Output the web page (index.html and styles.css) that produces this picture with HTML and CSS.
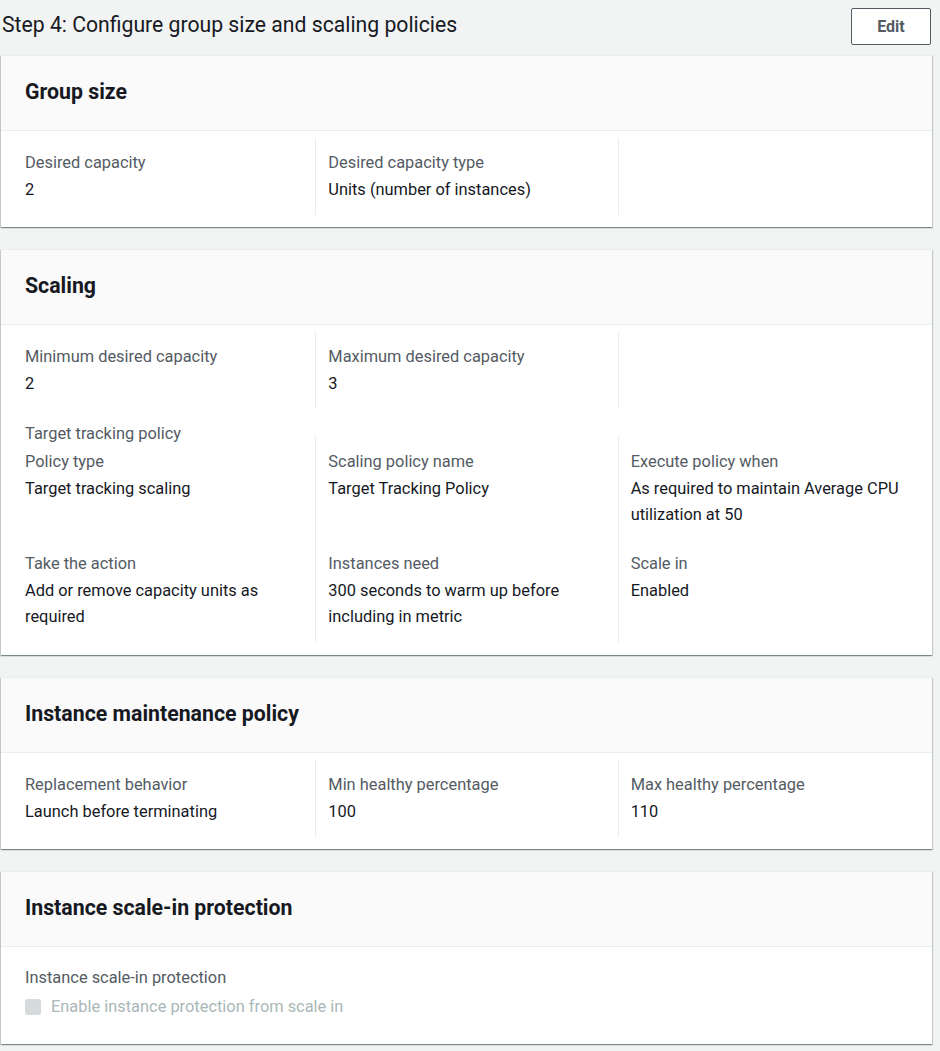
FILE: index.html
```html
<!DOCTYPE html>
<html lang="en">
<head>
<meta charset="utf-8">
<title>Step 4: Configure group size and scaling policies</title>
<link rel="stylesheet" href="styles.css">
</head>
<body>
<div class="page">
  <div class="step-header">
    <h2 class="step-title">Step 4: Configure group size and scaling policies</h2>
    <button class="btn-edit" type="button">Edit</button>
  </div>

  <section class="card">
    <div class="card-header"><h3>Group size</h3></div>
    <div class="card-body">
      <div class="grid">
        <div class="cell">
          <div class="label">Desired capacity</div>
          <div class="value">2</div>
        </div>
        <div class="cell">
          <div class="label">Desired capacity type</div>
          <div class="value">Units (number of instances)</div>
        </div>
        <div class="cell"></div>
      </div>
    </div>
  </section>

  <section class="card">
    <div class="card-header"><h3>Scaling</h3></div>
    <div class="card-body">
      <div class="grid">
        <div class="cell">
          <div class="label">Minimum desired capacity</div>
          <div class="value">2</div>
        </div>
        <div class="cell">
          <div class="label">Maximum desired capacity</div>
          <div class="value">3</div>
        </div>
        <div class="cell"></div>
      </div>
      <div class="sub-heading">Target tracking policy</div>
      <div class="grid grid-policy">
        <div class="cell row-first">
          <div class="label">Policy type</div>
          <div class="value">Target tracking scaling</div>
        </div>
        <div class="cell row-first">
          <div class="label">Scaling policy name</div>
          <div class="value">Target Tracking Policy</div>
        </div>
        <div class="cell row-first">
          <div class="label">Execute policy when</div>
          <div class="value">As required to maintain Average CPU utilization at 50</div>
        </div>
        <div class="cell row-last">
          <div class="label">Take the action</div>
          <div class="value">Add or remove capacity units as required</div>
        </div>
        <div class="cell row-last">
          <div class="label">Instances need</div>
          <div class="value">300 seconds to warm up before including in metric</div>
        </div>
        <div class="cell row-last">
          <div class="label">Scale in</div>
          <div class="value">Enabled</div>
        </div>
      </div>
    </div>
  </section>

  <section class="card">
    <div class="card-header"><h3>Instance maintenance policy</h3></div>
    <div class="card-body">
      <div class="grid">
        <div class="cell">
          <div class="label">Replacement behavior</div>
          <div class="value">Launch before terminating</div>
        </div>
        <div class="cell">
          <div class="label">Min healthy percentage</div>
          <div class="value">100</div>
        </div>
        <div class="cell">
          <div class="label">Max healthy percentage</div>
          <div class="value">110</div>
        </div>
      </div>
    </div>
  </section>

  <section class="card">
    <div class="card-header"><h3>Instance scale-in protection</h3></div>
    <div class="card-body card-body-plain">
      <div class="label">Instance scale-in protection</div>
      <label class="checkbox">
        <span class="checkbox-box"></span>
        <span class="checkbox-text">Enable instance protection from scale in</span>
      </label>
    </div>
  </section>
</div>
</body>
</html>
```

FILE: styles.css
```css
* { box-sizing: border-box; }

html, body {
  margin: 0;
  padding: 0;
  background: #f2f3f3;
}

body {
  font-family: Roboto, "Liberation Sans", sans-serif;
  color: #16191f;
  font-size: 16.4px;
  line-height: 26px;
}

.page {
  width: 932px;
  padding: 0 0 0 1px;
}

.step-header {
  display: flex;
  align-items: center;
  justify-content: space-between;
  height: 55px;
  padding-bottom: 1px;
}

.step-title {
  margin: 0 0 0 1px;
  font-size: 21.2px;
  font-weight: 400;
  line-height: 28px;
  color: #16191f;
  position: relative;
  top: -2px;
}

.btn-edit {
  width: 80px;
  height: 37px;
  margin-right: 1px;
  margin-top: -1px;
  background: #fff;
  border: 1px solid #545b64;
  border-radius: 2px;
  font-family: inherit;
  font-size: 16px;
  font-weight: 700;
  color: #545b64;
  padding: 0;
}

.card {
  background: #fff;
  box-shadow: 0 1px 1px 0 rgba(0, 28, 36, 0.3), 1px 1px 1px 0 rgba(0, 28, 36, 0.15), -1px 1px 1px 0 rgba(0, 28, 36, 0.15);
  border-top: 1px solid #eaeded;
  margin-bottom: 22px;
  width: 931px;
}

.card-header {
  background: #fafafa;
  border-bottom: 1px solid #eaeded;
  height: 75px;
  padding: 0 24px;
  display: flex;
  align-items: center;
}

.card-header h3 {
  margin: 0;
  font-size: 21.3px;
  font-weight: 700;
  line-height: 26px;
  color: #16191f;
  position: relative;
  top: -1px;
}

.card-body {
  padding: 7px 12px 12px;
}

.grid {
  display: grid;
  grid-template-columns: 1fr 1fr 1fr;
}

.cell {
  padding: 12px 12px 12px;
}

.cell:nth-child(3n+2),
.cell:nth-child(3n) {
  border-left: 1px solid #eaeded;
}

.grid-policy {
  margin-top: -11px;
}

.grid-policy .row-first {
  padding-top: 13px;
  padding-bottom: 11px;
}

.grid-policy .row-last {
  padding-top: 12px;
  padding-bottom: 13px;
}

.label {
  color: #545b64;
  margin-bottom: 1px;
}

.value {
  color: #16191f;
}

.sub-heading {
  color: #545b64;
  padding: 12px 12px 0;
}

.card-body-plain {
  padding: 18px 24px 23px;
}

.checkbox {
  display: flex;
  align-items: center;
  height: 29px;
}

.checkbox-box {
  width: 16px;
  height: 16px;
  background: #d5dbdb;
  border-radius: 2px;
  margin-right: 10px;
}

.checkbox-text {
  color: #aab7b8;
}
```
